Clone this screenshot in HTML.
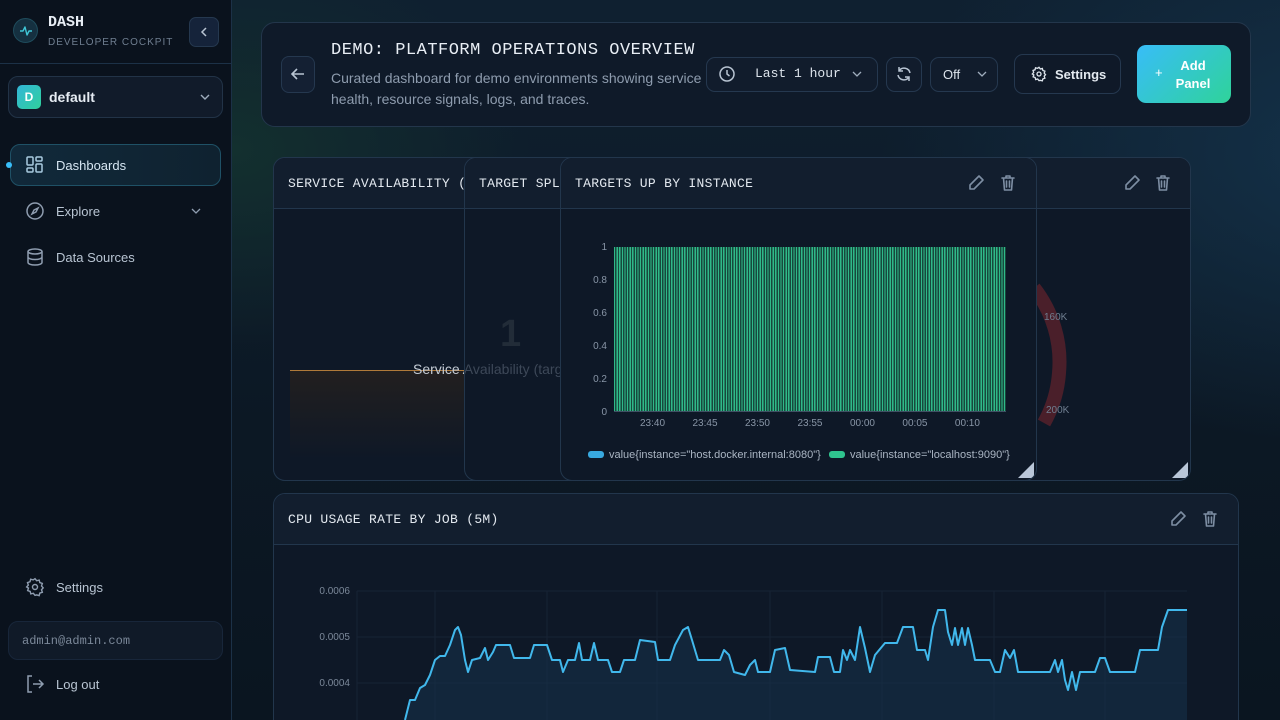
<!DOCTYPE html>
<html><head><meta charset="utf-8"><style>
*{box-sizing:border-box;margin:0;padding:0}
html,body{width:1280px;height:720px;overflow:hidden}
body{font-family:"Liberation Sans",sans-serif;background:#0c1622;position:relative;color:#cfd8e3}
.main{position:absolute;left:232px;top:0;width:1048px;height:720px;background:radial-gradient(ellipse 500px 300px at 1150px 150px,#14324a 0%,rgba(20,50,74,0) 100%),radial-gradient(ellipse 300px 200px at 0px 150px,#13302f 0%,rgba(19,48,47,0) 100%),linear-gradient(180deg,#0f2030 0%,#0c1824 60%,#0a1520 100%)}
.side{position:absolute;left:0;top:0;width:232px;height:720px;background:#0a121d;border-right:1px solid #1c3147}
.abs{position:absolute}
.mono{font-family:"Liberation Mono",monospace}
.panel{position:absolute;background:#0e1827;border:1px solid #22364c;border-radius:12px;overflow:hidden}
.ph{height:51px;border-bottom:1px solid #22364c;background:#121e2e;position:relative}
.pt{position:absolute;left:14px;top:18px;font-family:"Liberation Mono",monospace;font-size:13px;color:#e3e9f0;letter-spacing:.3px;white-space:nowrap}
.ico{position:absolute;stroke:#7d8ea3;fill:none;stroke-width:1.6;stroke-linecap:round;stroke-linejoin:round}
.corner{position:absolute;width:0;height:0;border-left:16px solid transparent;border-bottom:16px solid #b9c6d8;right:2px;bottom:2px}
.nav{position:absolute;left:26px;font-size:13px;color:#b8c4d2}
</style></head><body>
<div class="side">
  <div class="abs" style="left:13px;top:18px;width:25px;height:25px;border-radius:50%;background:#153040;border:1px solid #1f4c5c"></div>
  <svg class="abs" style="left:15px;top:20px" width="22" height="22" viewBox="0 0 22 22"><path d="M5 11h3l2-4 2 8 2-4h3" stroke="#3fc6d6" fill="none" stroke-width="1.4" stroke-linejoin="round"/></svg>
  <div class="abs mono" style="left:48px;top:14px;font-size:15px;font-weight:bold;color:#e8eef5">DASH</div>
  <div class="abs" style="left:48px;top:37px;font-size:10px;letter-spacing:1px;color:#6f7e90">DEVELOPER COCKPIT</div>
  <div class="abs" style="left:189px;top:17px;width:30px;height:30px;border-radius:7px;background:#15233a;border:1px solid #25384f"></div>
  <svg class="abs" style="left:197px;top:25px" width="14" height="14"><path d="M9 3l-4 4 4 4" stroke="#b8c4d2" fill="none" stroke-width="1.5"/></svg>
  <div class="abs" style="left:0;top:63px;width:231px;height:1px;background:#1c3147"></div>
  <div class="abs" style="left:8px;top:76px;width:215px;height:42px;border-radius:10px;background:#111b2a;border:1px solid #223347"></div>
  <div class="abs" style="left:17px;top:85px;width:24px;height:24px;border-radius:5px;background:linear-gradient(135deg,#33b5d8,#2fd19c);color:#fff;font-size:12px;font-weight:bold;text-align:center;line-height:24px">D</div>
  <div class="abs" style="left:49px;top:89px;font-size:14px;font-weight:bold;color:#e6ecf3">default</div>
  <svg class="abs" style="left:199px;top:91px" width="12" height="12"><path d="M2 4l4 4 4-4" stroke="#9fadbd" fill="none" stroke-width="1.4"/></svg>
  <div class="abs" style="left:10px;top:144px;width:211px;height:42px;border-radius:10px;background:linear-gradient(90deg,#11293a,#0f2230);border:1px solid #1f5166"></div>
  <div class="abs" style="left:6px;top:162px;width:6px;height:6px;border-radius:50%;background:#38bdf8"></div>
  <svg class="abs" style="left:25px;top:155px" width="20" height="20" viewBox="0 0 20 20" fill="none" stroke="#a9cbe0" stroke-width="1.5"><rect x="2" y="2" width="6" height="8" rx="1"/><rect x="11" y="2" width="6" height="4" rx="1"/><rect x="11" y="9" width="6" height="8" rx="1"/><rect x="2" y="13" width="6" height="4" rx="1"/></svg>
  <div class="nav" style="left:56px;top:158px;color:#d6e6f2">Dashboards</div>
  <svg class="abs" style="left:25px;top:201px" width="20" height="20" viewBox="0 0 20 20" fill="none" stroke="#8f9db0" stroke-width="1.5"><circle cx="10" cy="10" r="8"/><path d="M13 7l-2 4-4 2 2-4z"/></svg>
  <div class="nav" style="left:56px;top:204px">Explore</div>
  <svg class="abs" style="left:190px;top:205px" width="12" height="12"><path d="M2 4l4 4 4-4" stroke="#8f9db0" fill="none" stroke-width="1.3"/></svg>
  <svg class="abs" style="left:25px;top:247px" width="20" height="20" viewBox="0 0 20 20" fill="none" stroke="#8f9db0" stroke-width="1.5"><ellipse cx="10" cy="4.5" rx="7" ry="2.5"/><path d="M3 4.5v11c0 1.4 3.1 2.5 7 2.5s7-1.1 7-2.5v-11M3 10c0 1.4 3.1 2.5 7 2.5s7-1.1 7-2.5"/></svg>
  <div class="nav" style="left:56px;top:250px">Data Sources</div>
  <svg class="abs" style="left:25px;top:577px" width="20" height="20" viewBox="0 0 24 24" fill="none" stroke="#8f9db0" stroke-width="1.7"><circle cx="12" cy="12" r="3"/><path d="M12 2l2 2.5 3-.8.8 3 3 1-1 3 2 2.3-2 2.3 1 3-3 1-.8 3-3-.8L12 22l-2-2.5-3 .8-.8-3-3-1 1-3L2 12l2-2.3-1-3 3-1 .8-3 3 .8z"/></svg>
  <div class="nav" style="left:56px;top:580px">Settings</div>
  <div class="abs" style="left:8px;top:621px;width:215px;height:39px;border-radius:10px;background:#101a28;border:1px solid #18263a"></div>
  <div class="abs mono" style="left:22px;top:634px;font-size:12px;color:#7b8899">admin@admin.com</div>
  <svg class="abs" style="left:25px;top:674px" width="20" height="20" viewBox="0 0 20 20" fill="none" stroke="#8f9db0" stroke-width="1.5"><path d="M7 2H3v16h4M8 10h10M14 6l4 4-4 4"/></svg>
  <div class="nav" style="left:56px;top:677px">Log out</div>
</div>
<div class="main"></div>
<div class="abs" style="left:261px;top:22px;width:990px;height:105px;border-radius:14px;background:#0f1a29;border:1px solid #23364b"></div>
<div class="abs" style="left:281px;top:56px;width:34px;height:37px;border-radius:8px;background:#142033;border:1px solid #25384f"></div>
<svg class="abs" style="left:289px;top:65px" width="18" height="18"><path d="M15 9H3M8 4L3 9l5 5" stroke="#b8c4d2" fill="none" stroke-width="1.6"/></svg>
<div class="abs mono" style="left:331px;top:41px;font-size:17px;color:#e8eef5;letter-spacing:.5px">DEMO: PLATFORM OPERATIONS OVERVIEW</div>
<div class="abs" style="left:331px;top:68px;font-size:14px;color:#8e9cae;line-height:21px;width:380px">Curated dashboard for demo environments showing service health, resource signals, logs, and traces.</div>
<div class="abs" style="left:706px;top:57px;width:172px;height:35px;border-radius:9px;background:#111c2c;border:1px solid #25384f"></div>
<svg class="abs" style="left:718px;top:65px" width="18" height="18" viewBox="0 0 18 18" fill="none" stroke="#b8c4d2" stroke-width="1.5"><circle cx="9" cy="9" r="7"/><path d="M9 5v4l2.5 2"/></svg>
<div class="abs mono" style="left:755px;top:66px;font-size:13px;color:#dde4ec">Last 1 hour</div>
<svg class="abs" style="left:851px;top:68px" width="12" height="12"><path d="M2 4l4 4 4-4" stroke="#9fadbd" fill="none" stroke-width="1.3"/></svg>
<div class="abs" style="left:886px;top:57px;width:36px;height:35px;border-radius:9px;background:#111c2c;border:1px solid #25384f"></div>
<svg class="abs" style="left:895px;top:65px" width="18" height="18" viewBox="0 0 18 18" fill="none" stroke="#b8c4d2" stroke-width="1.5"><path d="M15 8a6 6 0 0 0-11-2M3 10a6 6 0 0 0 11 2M4 2v4h4M14 16v-4h-4"/></svg>
<div class="abs" style="left:930px;top:57px;width:68px;height:35px;border-radius:9px;background:#111c2c;border:1px solid #25384f"></div>
<div class="abs" style="left:943px;top:67px;font-size:13px;color:#dde4ec">Off</div>
<svg class="abs" style="left:976px;top:68px" width="12" height="12"><path d="M2 4l4 4 4-4" stroke="#9fadbd" fill="none" stroke-width="1.3"/></svg>
<div class="abs" style="left:1014px;top:54px;width:107px;height:40px;border-radius:9px;background:#0f1928;border:1px solid #25384f"></div>
<svg class="abs" style="left:1031px;top:66px" width="16" height="16" viewBox="0 0 24 24" fill="none" stroke="#dde4ec" stroke-width="2"><circle cx="12" cy="12" r="3"/><path d="M12 2l2 2.5 3-.8.8 3 3 1-1 3 2 2.3-2 2.3 1 3-3 1-.8 3-3-.8L12 22l-2-2.5-3 .8-.8-3-3-1 1-3L2 12l2-2.3-1-3 3-1 .8-3 3 .8z"/></svg>
<div class="abs" style="left:1055px;top:67px;font-size:13px;font-weight:bold;color:#e3e9f0">Settings</div>
<div class="abs" style="left:1137px;top:45px;width:94px;height:58px;border-radius:9px;background:linear-gradient(135deg,#38bdf8,#2fd39a)"></div>
<div class="abs" style="left:1155px;top:65px;font-size:13px;color:#fff">+</div>
<div class="abs" style="left:1170px;top:57px;font-size:13px;font-weight:bold;color:#fff;text-align:center;width:46px;line-height:18px">Add Panel</div>

<div class="panel" style="left:273px;top:157px;width:918px;height:324px">
  <div class="ph"></div>
  <svg class="ico" style="left:849px;top:16px" width="18" height="18" viewBox="0 0 18 18"><path d="M12 2l4 4-9 9H3v-4z"/></svg>
  <svg class="ico" style="left:880px;top:16px" width="18" height="18" viewBox="0 0 18 18"><path d="M3 4h12M7 4V2h4v2M4.5 4l1 12h7l1-12M7.5 7v6M10.5 7v6"/></svg>
  <svg class="abs" style="left:760px;top:120px" width="60" height="150" viewBox="0 0 60 150"><path d="M0 10 A120 120 0 0 1 25 95 A120 120 0 0 1 10 145" stroke="#4a1f2a" stroke-width="14" fill="none"/></svg>
  <div class="abs" style="left:770px;top:154px;font-size:10px;color:#6f7e90">160K</div>
  <div class="abs" style="left:772px;top:247px;font-size:10px;color:#6f7e90">200K</div>
  <div class="corner"></div>
</div>
<div class="panel" style="left:273px;top:157px;width:300px;height:324px">
  <div class="ph"></div><div class="pt">SERVICE AVAILABILITY (TARGET)</div>
  <div class="abs" style="left:16px;top:212px;width:280px;height:90px;border-top:1px solid #b07a3a;background:linear-gradient(180deg,#221f1f,#0e1827)"></div>
  <div class="abs" style="left:139px;top:203px;font-size:14px;color:#c3cbd5;white-space:nowrap">Service Availability (target)</div>
</div>
<div class="panel" style="left:464px;top:157px;width:477px;height:324px">
  <div class="ph"></div><div class="pt">TARGET SPLIT</div>
  <div class="abs" style="left:35px;top:155px;font-size:38px;font-weight:bold;color:#222c38">1</div>
  <div class="abs" style="left:-51px;top:203px;font-size:14px;color:#3d4858;white-space:nowrap">Service Availability (target)</div>
  <div class="corner"></div>
</div>
<div class="panel" style="left:560px;top:157px;width:477px;height:324px">
  <div class="ph"></div><div class="pt">TARGETS UP BY INSTANCE</div>
  <svg class="ico" style="left:406px;top:16px" width="18" height="18" viewBox="0 0 18 18"><path d="M12 2l4 4-9 9H3v-4z"/></svg>
  <svg class="ico" style="left:438px;top:16px" width="18" height="18" viewBox="0 0 18 18"><path d="M3 4h12M7 4V2h4v2M4.5 4l1 12h7l1-12M7.5 7v6M10.5 7v6"/></svg>
  <div class="abs" style="left:53px;top:89px;width:392px;height:165px;background:repeating-linear-gradient(90deg,#2fb989 0,#2fb989 1.2px,#17493d 1.2px,#17493d 2.6px)"></div>
  <div class="abs" style="left:53px;top:253px;width:392px;height:1px;background:#405064"></div>
  <div class="abs" style="left:0;top:73px;width:46px;text-align:right;font-size:10px;color:#8895a6;line-height:33px">1<br>0.8<br>0.6<br>0.4<br>0.2<br>0</div>
  <div class="abs" style="left:79px;top:260px;font-size:10px;color:#8895a6;white-space:nowrap;width:340px;display:flex;justify-content:space-between"><span>23:40</span><span>23:45</span><span>23:50</span><span>23:55</span><span>00:00</span><span>00:05</span><span>00:10</span></div>
  <div class="abs" style="left:27px;top:293px;width:16px;height:7px;border-radius:3px;background:#38a9e0"></div>
  <div class="abs" style="left:48px;top:291px;font-size:11px;color:#aab5c3;white-space:nowrap">value{instance="host.docker.internal:8080"}</div>
  <div class="abs" style="left:268px;top:293px;width:16px;height:7px;border-radius:3px;background:#2fc48f"></div>
  <div class="abs" style="left:289px;top:291px;font-size:11px;color:#aab5c3;white-space:nowrap">value{instance="localhost:9090"}</div>
  <div class="corner"></div>
</div>
<div class="panel" style="left:273px;top:493px;width:966px;height:240px">
  <div class="ph"></div><div class="pt">CPU USAGE RATE BY JOB (5M)</div>
  <svg class="ico" style="left:895px;top:16px" width="18" height="18" viewBox="0 0 18 18"><path d="M12 2l4 4-9 9H3v-4z"/></svg>
  <svg class="ico" style="left:927px;top:16px" width="18" height="18" viewBox="0 0 18 18"><path d="M3 4h12M7 4V2h4v2M4.5 4l1 12h7l1-12M7.5 7v6M10.5 7v6"/></svg>
  <div class="abs" style="left:20px;top:75px;width:56px;text-align:right;font-size:10px;color:#7b8899;line-height:46px">0.0006<br>0.0005<br>0.0004</div>
</div>
<svg class="abs" style="left:0;top:0" width="1280" height="720">
  <g stroke="#172334" stroke-width="1"><path d="M357 591H1187M357 637H1187M357 683H1187M357 591V720M435 591V720M547 591V720M657 591V720M770 591V720M882 591V720M994 591V720M1105 591V720"/></g>
  <path d="M405 720L410 700L415 700L420 688L425 685L430 675L435 660L440 656L445 656L450 645L455 630L458 627L461 635L465 660L468 672L472 660L480 658L485 648L488 660L493 652L496 645L504 645L510 645L514 658L530 658L534 645L547 645L552 660L560 660L563 672L568 660L575 660L579 643L582 660L590 660L594 643L598 660L608 660L612 672L620 672L624 660L635 660L640 640L655 642L658 660L670 660L675 645L683 630L688 627L692 640L698 660L720 660L724 650L729 655L734 672L745 675L750 665L755 660L758 672L770 672L775 650L785 648L790 670L815 672L818 657L830 657L834 672L840 672L843 650L847 660L850 650L855 660L860 627L865 648L870 672L875 655L885 643L897 643L903 627L913 627L917 650L925 650L928 660L933 627L938 610L945 610L948 632L952 645L955 628L958 645L962 628L965 645L968 628L972 645L975 660L990 660L995 672L1000 672L1005 650L1010 658L1014 650L1018 672L1050 672L1055 660L1058 672L1062 660L1065 680L1068 690L1072 672L1076 690L1080 672L1095 672L1100 658L1105 658L1110 672L1135 672L1140 650L1158 650L1162 627L1168 610L1187 610L1187 720Z" fill="#15314a" fill-opacity=".6" stroke="none"/>
  <path d="M405 720L410 700L415 700L420 688L425 685L430 675L435 660L440 656L445 656L450 645L455 630L458 627L461 635L465 660L468 672L472 660L480 658L485 648L488 660L493 652L496 645L504 645L510 645L514 658L530 658L534 645L547 645L552 660L560 660L563 672L568 660L575 660L579 643L582 660L590 660L594 643L598 660L608 660L612 672L620 672L624 660L635 660L640 640L655 642L658 660L670 660L675 645L683 630L688 627L692 640L698 660L720 660L724 650L729 655L734 672L745 675L750 665L755 660L758 672L770 672L775 650L785 648L790 670L815 672L818 657L830 657L834 672L840 672L843 650L847 660L850 650L855 660L860 627L865 648L870 672L875 655L885 643L897 643L903 627L913 627L917 650L925 650L928 660L933 627L938 610L945 610L948 632L952 645L955 628L958 645L962 628L965 645L968 628L972 645L975 660L990 660L995 672L1000 672L1005 650L1010 658L1014 650L1018 672L1050 672L1055 660L1058 672L1062 660L1065 680L1068 690L1072 672L1076 690L1080 672L1095 672L1100 658L1105 658L1110 672L1135 672L1140 650L1158 650L1162 627L1168 610L1187 610" fill="none" stroke="#41b8ec" stroke-width="2" stroke-linejoin="round"/>
</svg>
</body></html>
